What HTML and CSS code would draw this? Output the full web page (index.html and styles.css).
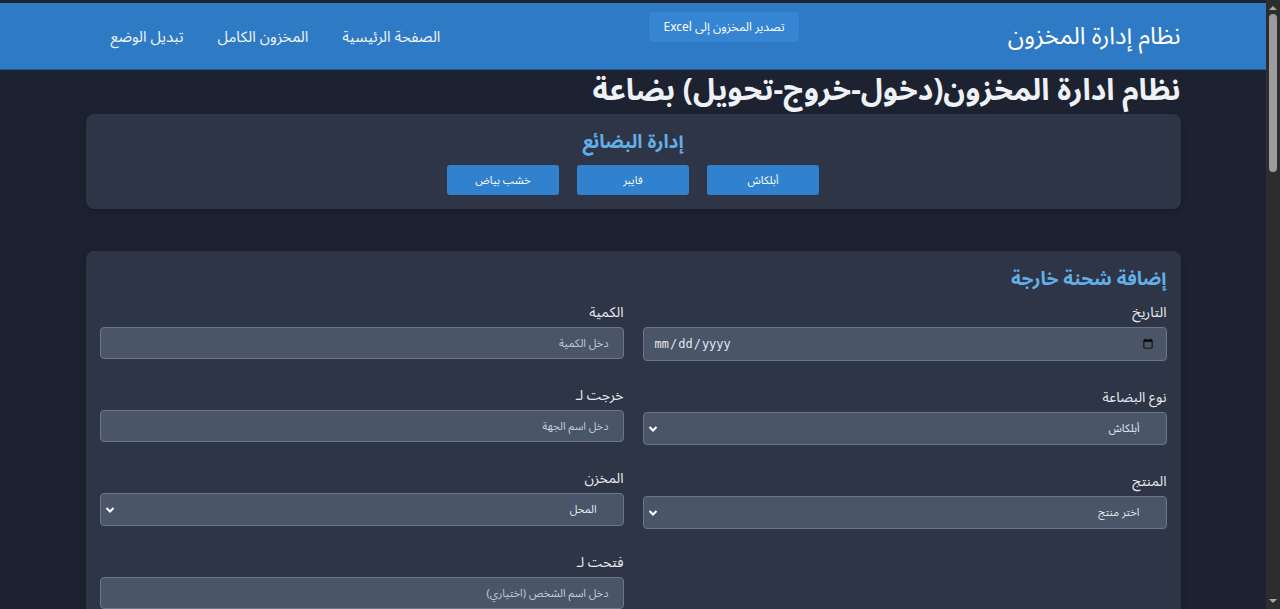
FILE: index.html
```html
<!DOCTYPE html>
<html lang="ar" dir="rtl">
<head>
<meta charset="utf-8">
<title>نظام إدارة المخزون</title>
<link rel="stylesheet" href="styles.css">
</head>
<body>
<div class="page">
<header class="topbar">
  <div class="topbar-inner">
    <div class="brand">نظام إدارة المخزون</div>
    <button class="export-btn">تصدير المخزون إلى Excel</button>
    <nav class="nav">
      <a class="nav-link" href="#">الصفحة الرئيسية</a>
      <a class="nav-link" href="#">المخزون الكامل</a>
      <a class="nav-link" href="#">تبديل الوضع</a>
    </nav>
  </div>
</header>

<main class="container">
  <h1 class="page-title">نظام ادارة المخزون(دخول-خروج-تحويل) بضاعة</h1>

  <section class="card goods-card">
    <h2 class="card-title center">إدارة البضائع</h2>
    <div class="goods-buttons">
      <button class="goods-btn">أبلكاش</button>
      <button class="goods-btn">فايبر</button>
      <button class="goods-btn">خشب بياض</button>
    </div>
  </section>

  <section class="card form-card">
    <h2 class="card-title">إضافة شحنة خارجة</h2>
    <div class="form-grid">
      <div class="form-col">
        <div class="field">
          <label class="label">التاريخ</label>
          <input class="control date-control" type="date">
        </div>
        <div class="field">
          <label class="label">نوع البضاعة</label>
          <select class="control select-control">
            <option>أبلكاش</option>
          </select>
        </div>
        <div class="field">
          <label class="label">المنتج</label>
          <select class="control select-control">
            <option>اختر منتج</option>
          </select>
        </div>
      </div>
      <div class="form-col">
        <div class="field">
          <label class="label">الكمية</label>
          <input class="control" type="text" placeholder="دخل الكمية">
        </div>
        <div class="field">
          <label class="label">خرجت لـ</label>
          <input class="control" type="text" placeholder="دخل اسم الجهة">
        </div>
        <div class="field">
          <label class="label">المخزن</label>
          <select class="control select-control">
            <option>المحل</option>
          </select>
        </div>
        <div class="field">
          <label class="label">فتحت لـ</label>
          <input class="control" type="text" placeholder="دخل اسم الشخص (اختياري)">
        </div>
      </div>
    </div>
  </section>
</main>
</div>
<div class="fake-scrollbar" aria-hidden="true">
  <span class="sb-arrow up"></span>
  <span class="sb-thumb"></span>
  <span class="sb-arrow down"></span>
</div>
</body>
</html>
```

FILE: styles.css
```css
* {
  box-sizing: border-box;
}
html, body {
  height: 100%;
}
body {
  margin: 0;
  background: #1c2230;
  color: #e2e8f0;
  font-family: "Noto Sans Arabic", "DejaVu Sans", "Noto Sans", sans-serif;
  overflow: hidden;
}
button, input, select {
  font-family: inherit;
}
.page {
  margin-right: 14px;
  padding-top: 3px;
}

.topbar {
  background: #2f7ac4;
  height: 67px;
  border-bottom: 1px solid #1f5a96;
}
.topbar-inner {
  max-width: 1095px;
  margin: 0 auto;
  height: 100%;
  display: flex;
  align-items: center;
  justify-content: space-between;
}
.brand {
  font-size: 24px;
  color: #ffffff;
}
.export-btn {
  align-self: flex-start;
  margin-top: 9px;
  width: 150px;
  height: 30px;
  border: none;
  border-radius: 4px;
  background: #3585d2;
  color: #ffffff;
  font-size: 12px;
}
.nav {
  display: flex;
  gap: 34px;
  padding-left: 25px;
  padding-top: 2px;
}
.nav-link {
  color: #f1f5fa;
  text-decoration: none;
  font-size: 15px;
}

.container {
  max-width: 1095px;
  margin: 0 auto;
}
.page-title {
  margin: 3px 0 5px;
  font-size: 30px;
  font-weight: 700;
  color: #eef1f5;
  line-height: 36px;
}

.card {
  background: #2d3546;
  border-radius: 8px;
  box-shadow: 0 2px 6px rgba(0, 0, 0, 0.25);
}
.goods-card {
  padding: 14px 14px 14px;
  height: 95px;
}
.card-title {
  margin: 0;
  font-size: 19px;
  font-weight: 700;
  color: #63aee6;
  line-height: 28px;
}
.card-title.center {
  text-align: center;
}
.goods-buttons {
  display: flex;
  justify-content: center;
  gap: 18px;
  margin-top: 9px;
}
.goods-btn {
  width: 112px;
  height: 30px;
  border: none;
  border-radius: 3px;
  background: #3182ce;
  color: #ffffff;
  font-size: 11px;
}

.form-card {
  margin-top: 42px;
  padding: 14px 14px 24px;
}
.form-card .card-title {
  margin-bottom: 10px;
}
.form-grid {
  display: grid;
  grid-template-columns: 1fr 1fr;
  column-gap: 19px;
}
.form-col {
  display: flex;
  flex-direction: column;
}
.field {
  display: flex;
  flex-direction: column;
  margin-bottom: 27px;
}
.label {
  font-size: 14px;
  color: #e6eaf0;
  margin-bottom: 4px;
  line-height: 20px;
}
.control {
  height: 32px;
  background: #4a5568;
  border: 1px solid #6b7688;
  border-radius: 4px;
  color: #e2e8f0;
  font-size: 11px;
  padding: 0 14px;
  outline: none;
}
.control::placeholder {
  color: #c5cbd4;
}
.date-control {
  height: 34px;
  direction: ltr;
  color-scheme: light;
  color: #e2e8f0;
  font-family: "DejaVu Sans Mono", monospace;
  font-size: 12px;
  padding: 0 10px;
}
.select-control {
  appearance: none;
  -webkit-appearance: none;
  height: 33px;
  background-image: url("data:image/svg+xml;utf8,<svg xmlns='http://www.w3.org/2000/svg' width='10' height='8' viewBox='0 0 10 8'><path d='M1.5 2 L5 5.5 L8.5 2' fill='none' stroke='white' stroke-width='2'/></svg>");
  background-repeat: no-repeat;
  background-position: left 4px center;
  padding-right: 26px;
}

.fake-scrollbar {
  position: fixed;
  top: 0;
  right: 0;
  width: 14px;
  height: 100%;
  background: #2e2d2d;
  display: flex;
  flex-direction: column;
  align-items: center;
}
.sb-thumb {
  margin-top: 4px;
  width: 8px;
  height: 158px;
  border-radius: 4px;
  background: #9c9c9c;
}
.sb-arrow {
  width: 0;
  height: 0;
  border-left: 4px solid transparent;
  border-right: 4px solid transparent;
}
.sb-arrow.up {
  margin-top: 6px;
  border-bottom: 4px solid #a8a8a8;
}
.sb-arrow.down {
  margin-top: auto;
  margin-bottom: 6px;
  border-top: 4px solid #a8a8a8;
}
```
